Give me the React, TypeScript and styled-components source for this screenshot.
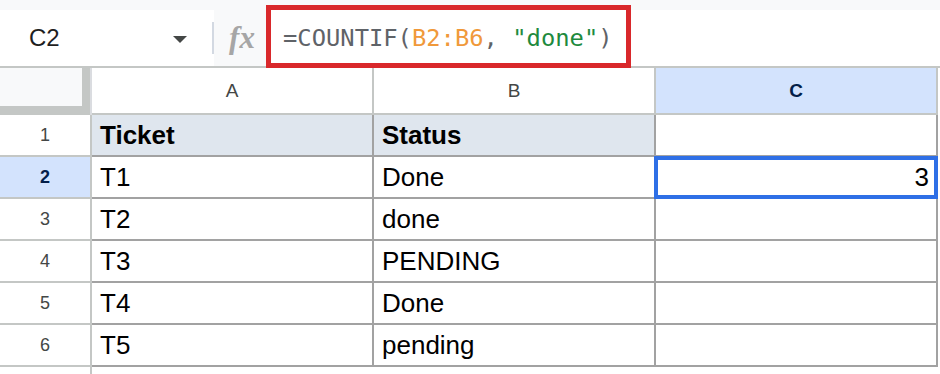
import React from "react";
import styled, { createGlobalStyle } from "styled-components";

const GlobalStyle = createGlobalStyle`
  html, body { margin: 0; padding: 0; background: #ffffff; }
  body { font-family: "Liberation Sans", Arial, sans-serif; overflow: hidden; }
`;

const Page = styled.div`
  width: 940px;
  height: 374px;
  overflow: hidden;
  background: #ffffff;
`;

const Toolbar = styled.div`
  position: relative;
  display: flex;
  align-items: stretch;
  height: 68px;
  padding-top: 10px;
  box-sizing: border-box;
  background: #f8f9fa;
  border-bottom: 2px solid #c4c7c5;
`;

const NameBox = styled.div`
  width: 212px;
  background: #ffffff;
  display: flex;
  align-items: center;
  justify-content: space-between;
  padding: 0 25px 0 29px;
  box-sizing: border-box;
`;

const NameText = styled.span`
  font-size: 24px;
  color: #1f1f1f;
`;

const Caret = styled.span`
  width: 0;
  height: 0;
  border-left: 7px solid transparent;
  border-right: 7px solid transparent;
  border-top: 7px solid #444746;
  margin-top: 2px;
`;

const Divider = styled.div`
  width: 2px;
  background: #ffffff;
  display: flex;
  align-items: center;
  &::after {
    content: "";
    display: block;
    width: 2px;
    height: 32px;
    background: #d3d9e2;
  }
`;

const FxBox = styled.div`
  width: 52px;
  background: #f8f9fa;
  display: flex;
  align-items: center;
  justify-content: center;
  font-family: "Liberation Serif", "Times New Roman", serif;
  font-style: italic;
  font-weight: bold;
  font-size: 31px;
  color: #a6a6a6;
  padding-left: 4px;
  box-sizing: border-box;
`;

const FormulaField = styled.div`
  flex: 1;
  background: #ffffff;
  display: flex;
  align-items: center;
  padding-left: 17px;
  font-family: "DejaVu Sans Mono", "Liberation Mono", monospace;
  font-size: 23.8px;
  color: #5f6368;
  white-space: pre;
`;

const Token = styled.span<{ $kind: "plain" | "ref" | "str" }>`
  color: ${(p) =>
    p.$kind === "ref" ? "#f0993a" : p.$kind === "str" ? "#1e8a3e" : "#5f6368"};
`;

const Highlight = styled.div`
  position: absolute;
  left: 266px;
  top: 5px;
  width: 365px;
  height: 63px;
  border: 5px solid #d9282b;
  box-sizing: border-box;
  pointer-events: none;
`;

const Grid = styled.div`
  display: grid;
  grid-template-columns: 92px 282px 282px 282px;
  grid-template-rows: 47px repeat(6, 42px) 20px;
`;

const Corner = styled.div`
  border-right: 2px solid #dadce0;
  box-sizing: border-box;
  background: #c4c7c5;
  display: flex;
  flex-direction: column;
  align-items: flex-start;
  &::before {
    content: "";
    display: block;
    width: 82px;
    height: 38px;
    background: #f8f9fa;
  }
`;

const ColHeader = styled.div<{ $selected?: boolean }>`
  box-sizing: border-box;
  border-right: 2px solid #c4c7c5;
  border-bottom: 2px solid #c4c7c5;
  background: ${(p) => (p.$selected ? "#d3e3fd" : "#ffffff")};
  color: ${(p) => (p.$selected ? "#041e49" : "#444746")};
  font-weight: ${(p) => (p.$selected ? "bold" : "normal")};
  font-size: 19px;
  display: flex;
  align-items: center;
  justify-content: center;
`;

const RowHeader = styled.div<{ $selected?: boolean; $stub?: boolean }>`
  box-sizing: border-box;
  border-right: 2px solid #c4c7c5;
  border-bottom: ${(p) => (p.$stub ? "none" : "2px solid #c4c7c5")};
  background: ${(p) => (p.$selected ? "#d3e3fd" : "#ffffff")};
  color: ${(p) => (p.$selected ? "#041e49" : "#444746")};
  font-weight: ${(p) => (p.$selected ? "bold" : "normal")};
  font-size: 18px;
  display: flex;
  align-items: center;
  justify-content: center;
`;

const Cell = styled.div<{ $head?: boolean; $align?: "left" | "right"; $active?: boolean }>`
  position: relative;
  box-sizing: border-box;
  border-right: 2px solid #a2a2a2;
  border-bottom: 2px solid #a2a2a2;
  background: ${(p) => (p.$head ? "#dfe6ee" : "#ffffff")};
  font-weight: ${(p) => (p.$head ? "bold" : "normal")};
  font-size: 26px;
  color: #000000;
  display: flex;
  align-items: center;
  justify-content: ${(p) => (p.$align === "right" ? "flex-end" : "flex-start")};
  padding: 0 7px 0 8px;
  white-space: nowrap;
`;

const ActiveFrame = styled.div`
  position: absolute;
  left: -2px;
  top: -1px;
  right: -2px;
  bottom: -2px;
  border: 4px solid #2e6fe6;
  pointer-events: none;
`;

const StubCell = styled.div``;

type Row = { a: string; b: string; c?: string };

const rows: Row[] = [
  { a: "Ticket", b: "Status" },
  { a: "T1", b: "Done", c: "3" },
  { a: "T2", b: "done" },
  { a: "T3", b: "PENDING" },
  { a: "T4", b: "Done" },
  { a: "T5", b: "pending" },
];

export default function App() {
  return (
    <Page>
      <GlobalStyle />
      <Toolbar>
        <NameBox>
          <NameText>C2</NameText>
          <Caret />
        </NameBox>
        <Divider />
        <FxBox>fx</FxBox>
        <FormulaField>
          <Token $kind="plain">=COUNTIF(</Token>
          <Token $kind="ref">B2:B6</Token>
          <Token $kind="plain">, </Token>
          <Token $kind="str">"done"</Token>
          <Token $kind="plain">)</Token>
        </FormulaField>
        <Highlight />
      </Toolbar>
      <Grid>
        <Corner />
        <ColHeader>A</ColHeader>
        <ColHeader>B</ColHeader>
        <ColHeader $selected>C</ColHeader>
        {rows.map((r, i) => {
          const n = i + 1;
          const head = n === 1;
          const active = n === 2;
          return (
            <React.Fragment key={n}>
              <RowHeader $selected={active}>{n}</RowHeader>
              <Cell $head={head}>{r.a}</Cell>
              <Cell $head={head}>{r.b}</Cell>
              <Cell $align="right">
                {r.c}
                {active && <ActiveFrame />}
              </Cell>
            </React.Fragment>
          );
        })}
        <RowHeader $stub />
        <StubCell />
        <StubCell />
        <StubCell />
      </Grid>
    </Page>
  );
}
